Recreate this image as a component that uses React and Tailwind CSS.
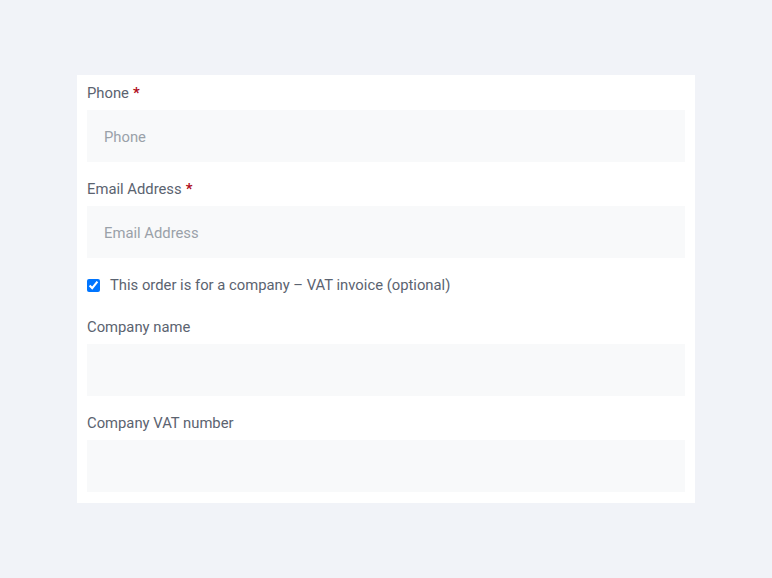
import { useState } from 'react'

function Field({ label, required, placeholder }) {
  return (
    <div className="flex flex-col">
      <label className="text-[14.8px] leading-[22px] text-[#5b6370]">
        {label}
        {required && <span className="ml-1 text-[#b00d1b] font-bold">*</span>}
      </label>
      <input
        type="text"
        placeholder={placeholder}
        className="mt-[6px] h-[52px] w-full bg-[#f8f9fa] px-[17px] pt-[2px] text-[14.8px] text-[#374151] placeholder:text-[#9aa1a9] outline-none"
      />
    </div>
  )
}

export default function App() {
  const [company, setCompany] = useState(true)
  return (
    <div className="min-h-screen bg-[#f1f3f8] pt-[75px] font-['Roboto',sans-serif]">
      <div className="flex w-[618px] flex-col bg-white px-[10px] pt-[7px] pb-[11px] ml-[77px]">
        <Field label="Phone" required placeholder="Phone" />
        <div className="mt-[16px]">
          <Field label="Email Address" required placeholder="Email Address" />
        </div>
        <label className="mt-[16px] flex items-center text-[14.8px] leading-[22px] text-[#5b6370]">
          <input
            type="checkbox"
            checked={company}
            onChange={(e) => setCompany(e.target.checked)}
            className="h-[13px] w-[13px]"
          />
          <span className="ml-[10px]">This order is for a company – VAT invoice (optional)</span>
        </label>
        <div className="mt-[20px]">
          <Field label="Company name" />
        </div>
        <div className="mt-[16px]">
          <Field label="Company VAT number" />
        </div>
      </div>
    </div>
  )
}
